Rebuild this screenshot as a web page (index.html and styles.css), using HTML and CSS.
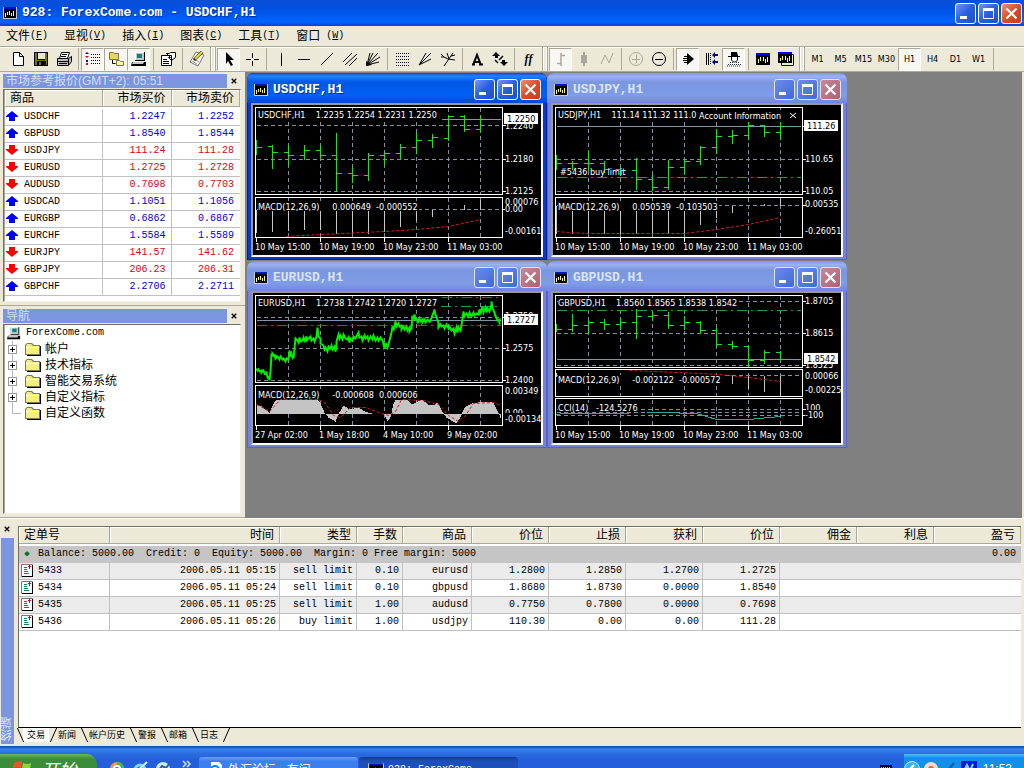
FILE: index.html
```html
<!DOCTYPE html>
<html lang="zh-CN">
<head>
<meta charset="utf-8">
<title>928: ForexCome.com - USDCHF,H1</title>
<link rel="stylesheet" href="styles.css">
</head>
<body>
<svg class="defs" aria-hidden="true">
  <symbol id="app" viewBox="0 0 14 12"><path fill="#c8c8c8" d="M0 0h14v12H0z"/><path fill="#000" d="M1 1h12v10H1z"/><path fill="#0018b8" d="M1 0h12v2H1z"/><path fill="#ff6" d="M2 6h1v4H2zM4 5h1v3H4zM6 4h1v4H6zM8 6h1v3H8zM10 4h1v5h-1z"/></symbol>
  <symbol id="min" viewBox="0 0 21 21"><path fill="#fff" d="M5 13h7v3H5z"/></symbol>
  <symbol id="max" viewBox="0 0 21 21"><path fill="none" stroke="#fff" d="M5.500 5.500h10v10h-10z"/><path fill="#fff" d="M5 5h11v3H5z"/></symbol>
  <symbol id="cls" viewBox="0 0 21 21"><path stroke="#fff" stroke-width="2.200" d="M5.500 5.500l10 10M15.500 5.500l-10 10"/></symbol>
  <symbol id="x" viewBox="0 0 8 8"><path fill="none" stroke="#000" stroke-width="1.800" d="M1 1l6 6M7 1L1 7"/></symbol>
  <symbol id="up" viewBox="0 0 12 10"><path fill="#00f" d="M6 0l6 5v1H9v4H3V6H0V5z"/></symbol>
  <symbol id="dn" viewBox="0 0 12 10"><path fill="#f00" d="M6 10L0 5V4h3V0h6v4h3v1z"/></symbol>
  <symbol id="pc" viewBox="0 0 16 16"><path fill="#000" d="M4 1h10v9H4zM1 11h14v4H0z"/><path fill="#c6c6c6" d="M4 1h9v8H4zM2 11h11l-1 2H1z"/><path fill="#088" d="M6 3h5v4H6z"/><path fill="#fff" d="M4 1h9v1H5v7H4z"/></symbol>
  <symbol id="folder" viewBox="0 0 16 13"><path fill="#000" d="M2 12h13V3h1v10H2z"/><path fill="#808040" d="M0 2l2-2h5l2 2h6v10H0z"/><path fill="#f3ee86" d="M1 3l1-2h4l2 2h6v8H1z"/><path fill="#fffcd0" d="M1 4h13v1H1z"/></symbol>
  <symbol id="doc" viewBox="0 0 12 13"><path fill="#fff" stroke="#777" d="M.5.5h11v12H.5z"/><path fill="#000" d="M1 12h11v1H1zM11 1h1v12h-1z"/><path stroke="#085" d="M3 3.500h3M3 5.500h3M3 7.500h4M3 9.500h5"/><path fill="#e00020" d="M8 1h1v1h1v1H9v2H8V3H7V2h1z"/></symbol>
  <g id="vgrid"><path class="grid" d="M35 2V89M67 2V89M99 2V89M131 2V89M163 2V89M195 2V89M227 2V89M35 92V132M67 92V132M99 92V132M131 92V132M163 92V132M195 92V132M227 92V132"/></g>
</svg>

<header class="titlebar">
  <svg class="appicon"><use href="#app"/></svg>
  <h1 class="caption">928: ForexCome.com - USDCHF,H1</h1>
  <div class="winbtns">
    <button class="wb" aria-label="最小化"><svg><use href="#min"/></svg></button>
    <button class="wb" aria-label="最大化"><svg><use href="#max"/></svg></button>
    <button class="wb red" aria-label="关闭"><svg><use href="#cls"/></svg></button>
  </div>
</header>

<nav class="menu">
  <button>文件<span class="m">(<u>F</u>)</span></button>
  <button>显视<span class="m">(<u>V</u>)</span></button>
  <button>插入<span class="m">(<u>I</u>)</span></button>
  <button>图表<span class="m">(<u>C</u>)</span></button>
  <button>工具<span class="m">(<u>T</u>)</span></button>
  <button>窗口<span class="m"> (<u>W</u>)</span></button>
</nav>

<div class="toolbar">
  <span class="grip"></span>
  <button aria-label="新建"><svg viewBox="0 0 16 16"><path fill="#fff" stroke="#000" d="M3.500 1.500h6l4 4v9h-10zM9.500 1.500v4h4"/></svg></button>
  <button aria-label="保存"><svg viewBox="0 0 16 16"><path d="M1 1h14v14H1z"/><path fill="#770" d="M2 2h2v7h8V2h2v12H2z"/><path fill="#e8e5d6" d="M5 2h7v6H5zM9 11h3v3H9z"/><path d="M4 10h9v5H8v-4H6v4H4z"/></svg></button>
  <button aria-label="打印"><svg viewBox="0 0 16 16"><path fill="#fff" stroke="#000" d="M5.500 1.500h8l-2 6h-8z"/><path fill="#bbb" stroke="#000" d="M1.500 7.500h11l3-2v5l-3 4h-11z"/><path stroke="#000" d="M1 10.500h11M3 12.500h8M6 3.500h5M5 5.500h5M12.500 8v6"/></svg></button>
  <span class="sep"></span>
  <button class="on" aria-label="市场报价"><svg viewBox="0 0 16 16"><path fill="#00c" d="M2 1l2 2H0zM1 9h2v2H1z"/><path fill="#e00" d="M0 5h4L2 7zM1 12h2v2H1z"/><path stroke="#000" stroke-dasharray="1 1" d="M6 3.500h10M6 6.500h10M6 9.500h10M6 12.500h10"/></svg></button>
  <button class="on" aria-label="导航"><svg viewBox="0 0 16 16"><path fill="#e9d750" stroke="#775" d="M1.500 1.500h4l1 1h4v6h-9z"/><path fill="#fff59a" stroke="#775" d="M8.500 9.500h3l1 1h3v4h-7z"/><path stroke="#000" fill="none" d="M4.500 9v3.500h3"/></svg></button>
  <button class="on" aria-label="终端"><svg viewBox="0 0 16 16"><use href="#pc"/></svg></button>
  <span class="sep"></span>
  <button aria-label="属性"><svg viewBox="0 0 16 16"><path fill="#fff" stroke="#000" d="M1.500 4.500h10v10h-10zM6.500 2.500h3l1-1h5v5l-4 3-3-3h2z"/><path stroke="#000" d="M3 8.500h4M3 10.500h6M3 12.500h6"/></svg></button>
  <span class="sep"></span>
  <button aria-label="测试"><svg viewBox="0 0 16 16"><path fill="#fff" stroke="#777" d="M7 1l8 3-6 11-8-4z"/><path stroke="#987" d="M3 10l5 3M5 8l5 3"/><path stroke="#000" stroke-width="3" d="M5 9l8-8"/><path stroke="#fd2" stroke-width="2" d="M6 8l7-7"/></svg></button>
  <span class="gripgap"></span>
  <button class="on" aria-label="光标"><svg viewBox="0 0 16 16"><path d="M5 1l8 8H9l3 5-2 1-3-5-2 3z"/></svg></button>
  <button aria-label="十字"><svg viewBox="0 0 16 16"><path stroke="#000" d="M8.500 2v5M8.500 10v5M2 8.500h5M10 8.500h5"/></svg></button>
  <span class="sep"></span>
  <button aria-label="垂直线"><svg viewBox="0 0 16 16"><path stroke="#000" d="M8.500 2v13"/></svg></button>
  <button aria-label="水平线"><svg viewBox="0 0 16 16"><path stroke="#000" d="M2 8.500h12"/></svg></button>
  <button aria-label="趋势线"><svg viewBox="0 0 16 16"><path stroke="#000" d="M2 14L14 2"/></svg></button>
  <button aria-label="通道"><svg viewBox="0 0 16 16"><path stroke="#000" d="M1 11l9-9M3 14L15 3M7 15l8-8"/></svg></button>
  <button aria-label="江恩扇形"><svg viewBox="0 0 16 16"><path stroke="#000" d="M2 14L5 2M2 14l6-12M2 14L13 2M2 14l13-8M2 14l12-3"/><path d="M1 15v-5l6 4z"/></svg></button>
  <span class="sep"></span>
  <button aria-label="斐波那契"><svg viewBox="0 0 16 16"><path stroke="#000" stroke-dasharray="1 1" d="M2 2.500h13M2 5.500h13M2 8.500h13M2 11.500h13M2 14.500h13"/></svg></button>
  <button aria-label="扇形"><svg viewBox="0 0 16 16"><path stroke="#000" d="M2 14L9 2M2 14L14 2M2 14l12-6"/></svg></button>
  <button aria-label="叉线"><svg viewBox="0 0 16 16"><path fill="none" stroke="#000" d="M4 15L13 2M1 3l3 3 4 2 7 1M7 2l2 6M1 6l3 0M11 5l4-1"/></svg></button>
  <span class="sep"></span>
  <button aria-label="文本"><svg viewBox="0 0 16 16"><path fill="none" stroke="#000" stroke-width="2" d="M4 14L8 4l4 10M5.500 11h5M3 13.500h3M10 13.500h4"/></svg></button>
  <button aria-label="箭头"><svg viewBox="0 0 16 16"><path d="M4 1l4 4H6v2H3V5H0zM12 15l-4-4h2V9h3v2h3z"/><path stroke="#000" stroke-width="1.500" d="M3 9l3 3M7 9l4-4"/></svg></button>
  <span class="sep"></span>
  <button class="ff" aria-label="指标"><i>f</i><i>f</i></button>
  <span class="gripgap"></span>
  <button class="on" aria-label="柱状图"><svg viewBox="0 0 16 16"><path stroke="#aaa79a" stroke-width="1.500" d="M8 2v13M8 4.500h4M4 12.500h4"/></svg></button>
  <button aria-label="蜡烛图"><svg viewBox="0 0 16 16"><path fill="#aaa79a" d="M7 1h2v3h2v8H9v3H7v-3H5V4h2z"/></svg></button>
  <button aria-label="折线图"><svg viewBox="0 0 16 16"><path fill="none" stroke="#aaa79a" d="M2 13l4-9 4 8 4-10"/></svg></button>
  <span class="sep"></span>
  <button aria-label="放大"><svg viewBox="0 0 16 16"><circle cx="8" cy="8" r="6.500" fill="none" stroke="#aaa79a"/><path stroke="#aaa79a" d="M4 8.500h8M8.500 4v8"/></svg></button>
  <button aria-label="缩小"><svg viewBox="0 0 16 16"><circle cx="8" cy="8" r="6.500" fill="none" stroke="#000"/><path stroke="#000" d="M4 8.500h8"/></svg></button>
  <span class="sep"></span>
  <button class="on" aria-label="自动滚动"><svg viewBox="0 0 16 16"><path d="M7 2l7 6-7 6z"/><path stroke="#000" d="M4 5.500h4M3 7.500h4M3 9.500h4M4 11.500h4"/></svg></button>
  <button aria-label="图表移位"><svg viewBox="0 0 16 16"><path stroke="#000" d="M3.500 2v12M5.500 2v12"/><path stroke="#000" stroke-dasharray="1 1" d="M7.500 2v12"/><path fill="#008" d="M9 4l3-3v2h3v2h-3v2zM9 11l3-3v2h3v2h-3v2z"/></svg></button>
  <button class="on" aria-label="专家"><svg viewBox="0 0 16 16"><path d="M5 1h6l1 4h2v1H2V5h3z"/><path fill="#fff" stroke="#000" d="M5.500 6v3l2 2h2l2-2V6"/><path stroke="#235" stroke-dasharray="1 1" d="M2 13.500h13M1 15h14M4 11.500h3M10 11.500h3"/></svg></button>
  <span class="sep"></span>
  <button aria-label="新图表"><svg viewBox="0 0 16 16"><path d="M1 2h14v12H1z"/><path fill="#00f" d="M1 2h14v2H1z"/><path fill="#ff5" d="M3 8h1v4H3zM5 6h1v4H5zM8 6h1v4H8zM10 8h1v4h-1zM12 6h1v5h-1z"/></svg></button>
  <button aria-label="配置"><svg viewBox="0 0 16 16"><path fill="none" stroke="#008" d="M3.500 3.500h12v11h-12z"/><path d="M0 1h14v11H0z"/><path fill="#00f" d="M0 1h14v2H0z"/><path fill="#ff5" d="M2 7h1v3H2zM4 5h1v4H4zM7 5h1v4H7zM9 7h1v4H9zM11 5h1v5h-1z"/></svg></button>
  <span class="gripgap"></span>
  <button>M1</button><button>M5</button><button>M15</button><button>M30</button><button class="on">H1</button><button>H4</button><button>D1</button><button>W1</button>
  <span class="sep"></span>
</div>

<main class="work">
  <aside class="side">
    <section class="panel market">
      <div class="ptitle"><h2>市场参考报价(GMT+2): 05:51</h2><button aria-label="关闭"><svg><use href="#x"/></svg></button></div>
      <div class="well">
        <table class="quotes">
          <thead><tr><th>商品</th><th>市场买价</th><th>市场卖价</th></tr></thead>
          <tbody>
            <tr class="u"><td><svg><use href="#up"/></svg>USDCHF</td><td>1.2247</td><td>1.2252</td></tr>
            <tr class="u"><td><svg><use href="#up"/></svg>GBPUSD</td><td>1.8540</td><td>1.8544</td></tr>
            <tr class="d"><td><svg><use href="#dn"/></svg>USDJPY</td><td>111.24</td><td>111.28</td></tr>
            <tr class="d"><td><svg><use href="#dn"/></svg>EURUSD</td><td>1.2725</td><td>1.2728</td></tr>
            <tr class="d"><td><svg><use href="#dn"/></svg>AUDUSD</td><td>0.7698</td><td>0.7703</td></tr>
            <tr class="u"><td><svg><use href="#up"/></svg>USDCAD</td><td>1.1051</td><td>1.1056</td></tr>
            <tr class="u"><td><svg><use href="#up"/></svg>EURGBP</td><td>0.6862</td><td>0.6867</td></tr>
            <tr class="u"><td><svg><use href="#up"/></svg>EURCHF</td><td>1.5584</td><td>1.5589</td></tr>
            <tr class="d"><td><svg><use href="#dn"/></svg>EURJPY</td><td>141.57</td><td>141.62</td></tr>
            <tr class="d"><td><svg><use href="#dn"/></svg>GBPJPY</td><td>206.23</td><td>206.31</td></tr>
            <tr class="u"><td><svg><use href="#up"/></svg>GBPCHF</td><td>2.2706</td><td>2.2711</td></tr>
          </tbody>
        </table>
      </div>
    </section>
    <section class="panel navi">
      <div class="ptitle"><h2>导航</h2><button aria-label="关闭"><svg><use href="#x"/></svg></button></div>
      <div class="well">
        <div class="root"><svg><use href="#pc"/></svg><span class="m">ForexCome.com</span></div>
        <ul class="tree">
          <li><button class="plus" aria-label="展开"></button><svg><use href="#folder"/></svg>帐户</li>
          <li><button class="plus" aria-label="展开"></button><svg><use href="#folder"/></svg>技术指标</li>
          <li><button class="plus" aria-label="展开"></button><svg><use href="#folder"/></svg>智能交易系统</li>
          <li><button class="plus" aria-label="展开"></button><svg><use href="#folder"/></svg>自定义指标</li>
          <li class="last"><svg><use href="#folder"/></svg>自定义函数</li>
        </ul>
      </div>
    </section>
  </aside>

  <div class="mdi">
    <section class="win w1 active">
      <div class="wtitle"><svg class="appicon"><use href="#app"/></svg><h2 class="caption">USDCHF,H1</h2><div class="winbtns"><button class="wb" aria-label="最小化"><svg><use href="#min"/></svg></button><button class="wb" aria-label="最大化"><svg><use href="#max"/></svg></button><button class="wb red" aria-label="关闭"><svg><use href="#cls"/></svg></button></div></div>
      <svg class="chart" viewBox="0 0 288 150">
        <g class="px">
          <use href="#vgrid"/><path class="grid" d="M3 20H249M3 54H249M3 86H249M3 104H249"/>
          <path class="price" d="M188 14H247"/>
          <path class="bar" d="M3 34V49M3 42h5M19 39V63M14 41h5M19 47h5M35 39V60M30 47h5M35 50h5M51 39V54M46 50h5M51 45h5M67 39V53M62 45h5M67 50h5M83 27V85M78 50h5M83 68h5M99 62V77M94 68h5M99 70h5M115 47V75M110 70h5M115 50h5M131 46V59M126 50h5M131 48h5M147 38V54M142 48h5M147 42h5M163 27V48M158 42h5M163 35h5M179 28V42M174 35h5M179 32h5M195 10V35M190 33h5M195 11h5M211 9V26M206 11h5M211 24h5M227 10V26M222 24h5M227 14h5"/>
          <path class="hist" d="M3 104V127M19 104V126M35 104V125M51 104V124M67 104V124M83 104V128M99 104V128M115 104V128M131 104V126M147 104V121M163 104V115M179 104V111M211 99V104M227 94V104"/>
          <path class="sig" d="M33 131L67 129L131 126L163 124L195 121L227 114"/>
          <path class="frame" d="M2 2H249V89H2zM2 92H249V132H2zM249 20h3M249 54h3M249 86h3M249 104h2M3 132v4M67 132v4M131 132v4M195 132v4"/>
        </g>
        <rect x="5" y="5" width="182" height="10"/><rect x="5" y="96" width="161" height="10"/>
        <text x="5" y="13">USDCHF,H1&#160;&#160;&#160; 1.2235 1.2254 1.2231 1.2250</text>
        <text x="5" y="105">MACD(12,26,9)&#160;&#160;&#160;&#160; 0.000649&#160; -0.000552</text>
        <text x="252" y="24">1.2240</text><text x="252" y="57">1.2180</text><text x="252" y="89">1.2125</text><text x="252" y="100">0.00076</text><text x="252" y="107">0.00</text><text x="252" y="129">-0.00161</text>
        <rect class="tag" x="251" y="8" width="34" height="11"/><text class="tagt" x="254" y="17">1.2250</text>
        <text x="2" y="145">10 May 15:00</text><text x="66" y="145">10 May 19:00</text><text x="130" y="145">10 May 23:00</text><text x="194" y="145">11 May 03:00</text>
      </svg>
    </section>

    <section class="win w2">
      <div class="wtitle"><svg class="appicon"><use href="#app"/></svg><h2 class="caption">USDJPY,H1</h2><div class="winbtns"><button class="wb" aria-label="最小化"><svg><use href="#min"/></svg></button><button class="wb" aria-label="最大化"><svg><use href="#max"/></svg></button><button class="wb red" aria-label="关闭"><svg><use href="#cls"/></svg></button></div></div>
      <svg class="chart" viewBox="0 0 288 150">
        <g class="px">
          <use href="#vgrid"/><path class="grid" d="M3 54H249M3 86H249M3 100H249"/>
          <path class="price" d="M3 21H247"/><path class="order" d="M3 72H247"/>
          <path class="bar" d="M3 49V64M3 58h5M19 55V64M14 58h10M35 45V65M30 58h10M51 55V67M46 58h5M51 64h5M67 62V70M62 64h5M67 65h5M83 52V84M78 65h5M83 74h5M99 68V85M94 74h5M99 82h5M115 54V84M110 82h5M115 62h5M131 54V68M126 62h5M131 56h5M147 40V59M142 56h5M147 42h5M163 23V48M158 42h5M163 31h5M179 24V38M174 31h5M179 30h5M195 16V34M190 30h5M195 20h5M211 19V31M206 20h5M211 27h5M227 16V34M222 27h5M227 21h5"/>
          <path class="hist" d="M3 100V128M19 100V128M35 100V128M51 100V128M67 100V128M83 100V128M99 100V128M115 100V128M131 100V127M147 100V119M163 100V112M179 100V107M211 98V100M227 93V100"/>
          <path class="sig" d="M3 126L15 127L35 128H131L163 124L195 119L227 112"/>
          <path class="frame" d="M2 2H249V89H2zM2 92H249V132H2zM249 21h3M249 54h3M249 86h3M249 100h3M3 132v4M67 132v4M131 132v4M195 132v4"/>
        </g>
        <rect x="5" y="5" width="140" height="10"/><rect x="5" y="96" width="161" height="10"/>
        <text x="5" y="13">USDJPY,H1&#160;&#160;&#160; 111.14 111.32 111.0</text>
        <rect x="145" y="5" width="101" height="11"/><text x="146" y="14">Account Information</text>
        <path class="cx" d="M237 8l6 5M243 8l-6 5"/>
        <text x="7" y="70">#5436 buy limit</text>
        <text x="5" y="105">MACD(12,26,9)&#160;&#160;&#160;&#160; 0.050539&#160; -0.103503</text>
        <text x="252" y="57">110.65</text><text x="252" y="89">110.05</text><text x="252" y="102">0.00535</text><text x="252" y="129">-0.26051</text>
        <rect class="tag" x="251" y="15" width="34" height="11"/><text class="tagt" x="254" y="24">111.26</text>
        <text x="2" y="145">10 May 15:00</text><text x="66" y="145">10 May 19:00</text><text x="130" y="145">10 May 23:00</text><text x="194" y="145">11 May 03:00</text>
      </svg>
    </section>

    <section class="win w3">
      <div class="wtitle"><svg class="appicon"><use href="#app"/></svg><h2 class="caption">EURUSD,H1</h2><div class="winbtns"><button class="wb" aria-label="最小化"><svg><use href="#min"/></svg></button><button class="wb" aria-label="最大化"><svg><use href="#max"/></svg></button><button class="wb red" aria-label="关闭"><svg><use href="#cls"/></svg></button></div></div>
      <svg class="chart" viewBox="0 0 288 150">
        <g class="px">
          <use href="#vgrid"/><path class="grid" d="M3 24H249M3 55H249M3 87H249"/>
          <path class="stop" d="M188 4H247M3 32H247"/><path class="order" d="M187 13H247"/><path class="price" d="M3 27H247"/>
        </g>
        <g class="px">
          <path class="line" d="M3 75l1 2 1-1 1 2 2-1v2l2-2 1 3L13 79l1 5 1 1 1-2v4L17 78L18 60l1 3v-3l2 3 1-2v4l2-2 2 3 1-3 2 3 1-1 2 3 1-3 2 1L36 57l1 6 1-3 1 4 1-2V65L42 45l2 2 1 2 1-5 1 4 2-1 1-3 1 3 2-4v4L55 45l2-2 1 4 2-2L61 48L63 43L64 34l1 9L66 44l1 1v5L70 52l1 4 1-2 2 4 1-5 2 2 1-3 1 4 2-3 1 5L83 53V48L85 41l1 4 1-3 2 4 1-5 2 4 2 1 1-2 1 5 1-4 2 2L100 43l2 2 3-6 1 5 2-1 1 4 2-5 1 3 2-2 1 4 2-4 2 3 1-4 2 5 2-3 1 3 2-3 1 2L129 46l1 5 1-2v5l2-3 1 3L135 51l1-4L138 39l1-6 1 4L142 28l1 5 2-3 1 3 2-1V36l2-3 1 3 2-3 1 4 2-3V38L158 35L159 22l1 4 1-5 1 5 2 0V30l2-5 1 3 2-2V29l2-3 1 3 2-3 2 2L176 29L179 22L181 16l1 6 1 1L184 27l1 2V34l2-3 1 2 2-1 1 3 2-4 2 4 1-2 2 4L200 35l1 5 2-6 1 5 1-5 2 3L208 32L210 18l1 5 2-3 2 3 1-4 2 4 2-4 1 3 2-2 2 1L226 16l1 5 1-5L229 13l1 6 2-5 1 5 1-4 2 3L238 11V8L239 15L241 19l1 4V22L244 27L246 26V31"/>
          <path class="area" d="M3 111L8 113L13 117L16 120L20 110L23 106H63L67 110L71 119L75 124L82 128L86 119L90 112L96 116L105 114L111 118L118 120L130 120L134 127L137 124L140 110L142 106H153L159 111L168 106L175 111L180 112L184 109L188 117L193 124L203 130L207 124L211 114L218 110L230 108H239L243 115L247 124V120H3z"/>
          <path class="sig" d="M3 111L16 118L27 106H65L72 110L80 122L87 124L97 114L112 114L125 119L135 122L142 118L148 106L170 107L185 111L195 122L205 128L212 122L220 110L240 109L247 112"/>
          <path class="frame" d="M2 2H249V89H2zM2 92H249V132H2zM249 24h3M249 55h3M249 87h3M3 132v4M67 132v4M131 132v4M195 132v4"/>
        </g>
        <rect x="5" y="5" width="180" height="10"/><rect x="5" y="96" width="161" height="10"/>
        <text x="5" y="13">EURUSD,H1&#160;&#160;&#160; 1.2738 1.2742 1.2720 1.2727</text>
        <text x="5" y="105">MACD(12,26,9)&#160;&#160;&#160;&#160; -0.000608&#160; 0.000606</text>
        <text x="252" y="26">1.2750</text><text x="252" y="58">1.2575</text><text x="252" y="90">1.2400</text><text x="252" y="101">0.00349</text><text x="252" y="123">0.00</text><rect x="250" y="120" width="38" height="10"/><text x="252" y="129">-0.00134</text>
        <rect class="tag" x="251" y="21" width="34" height="11"/><text class="tagt" x="254" y="30">1.2727</text>
        <text x="2" y="145">27 Apr 02:00</text><text x="66" y="145">1 May 18:00</text><text x="130" y="145">4 May 10:00</text><text x="194" y="145">9 May 02:00</text>
      </svg>
    </section>

    <section class="win w4">
      <div class="wtitle"><svg class="appicon"><use href="#app"/></svg><h2 class="caption">GBPUSD,H1</h2><div class="winbtns"><button class="wb" aria-label="最小化"><svg><use href="#min"/></svg></button><button class="wb" aria-label="最大化"><svg><use href="#max"/></svg></button><button class="wb red" aria-label="关闭"><svg><use href="#cls"/></svg></button></div></div>
      <svg class="chart" viewBox="0 0 288 150">
        <g class="px">
          <use href="#vgrid"/><path class="grid" d="M3 8H249M3 40H249M3 72H249M3 82H249M3 116H249M3 119H249M3 122H249"/>
          <path class="price" d="M3 66H247"/><path class="order" d="M3 17H247"/>
          <path class="bar" d="M3 30V38M3 36h5M19 20V38M14 36h5M19 32h5M35 26V40M30 32h5M35 29h5M51 25V36M46 29h5M51 31h5M67 24V36M62 31h5M67 29h5M83 15V45M78 29h5M83 23h5M99 18V27M94 23h5M99 22h5M115 18V35M110 22h5M115 32h5M131 22V36M126 32h5M131 29h5M147 27V40M142 29h5M147 37h5M163 34V53M158 37h5M163 51h5M179 47V55M174 51h5M179 53h5M195 53V72M190 53h5M195 67h5M211 56V70M206 67h5M211 59h5M227 57V67M222 59h5M227 66h5"/>
          <path class="hist" d="M3 79V83M179 82V90M195 82V95M211 82V98M227 82V102"/>
          <path class="sig" d="M76 77L126 79L166 81L195 84L227 88"/>
          <path class="gap" d="M3 75H249M3 104H249"/>
          <path class="frame" d="M2 2H249V74H2zM2 76H249V103H2zM2 105H249V132H2zM249 8h3M249 40h3M249 72h3M249 116h3M249 122h3M3 132v4M67 132v4M131 132v4M195 132v4"/>
        </g>
        <rect x="5" y="5" width="181" height="10"/><rect x="5" y="82" width="165" height="10"/><rect x="5" y="110" width="83" height="9"/>
        <g class="px"><path class="cci" d="M3 121L10 120H75M93 119H106L143 120L163 126H195L227 123"/></g>
        <text x="5" y="13">GBPUSD,H1&#160;&#160;&#160; 1.8560 1.8565 1.8538 1.8542</text>
        <text x="5" y="90">MACD(12,26,9)&#160;&#160;&#160;&#160; -0.002122&#160; -0.000572</text>
        <text x="5" y="118">CCI(14)&#160;&#160; -124.5276</text>
        <text x="252" y="11">1.8705</text><text x="252" y="43">1.8615</text><text x="252" y="75">1.8525</text><text x="252" y="86">0.00066</text><text x="252" y="100">-0.00225</text><text x="252" y="118">100</text><rect x="252" y="117" width="34" height="8"/><text x="252" y="125">-100</text>
        <rect class="tag" x="251" y="60" width="34" height="11"/><text class="tagt" x="254" y="69">1.8542</text>
        <text x="2" y="145">10 May 15:00</text><text x="66" y="145">10 May 19:00</text><text x="130" y="145">10 May 23:00</text><text x="194" y="145">11 May 03:00</text>
      </svg>
    </section>
  </div>
</main>

<section class="terminal">
  <div class="strip"><button aria-label="关闭"><svg><use href="#x"/></svg></button><h2>终端</h2></div>
  <div class="tmain">
    <div class="twell">
      <table class="orders">
        <colgroup><col class="c91"><col class="c170"><col class="c77"><col class="c46"><col class="c69"><col class="c77"><col class="c77"><col class="c77"><col class="c77"><col class="c77"><col class="c77"><col></colgroup>
        <thead><tr><th>定单号</th><th>时间</th><th>类型</th><th>手数</th><th>商品</th><th>价位</th><th>止损</th><th>获利</th><th>价位</th><th>佣金</th><th>利息</th><th>盈亏</th></tr></thead>
        <tbody>
          <tr class="bal"><td colspan="11"><span class="dot">◆</span>Balance: 5000.00&#160; Credit: 0&#160; Equity: 5000.00&#160; Margin: 0 Free margin: 5000</td><td>0.00</td></tr>
          <tr class="alt"><td><svg><use href="#doc"/></svg>5433</td><td>2006.05.11 05:15</td><td>sell limit</td><td>0.10</td><td>eurusd</td><td>1.2800</td><td>1.2850</td><td>1.2700</td><td>1.2725</td><td></td><td></td><td></td></tr>
          <tr><td><svg><use href="#doc"/></svg>5434</td><td>2006.05.11 05:24</td><td>sell limit</td><td>0.10</td><td>gbpusd</td><td>1.8680</td><td>1.8730</td><td>0.0000</td><td>1.8540</td><td></td><td></td><td></td></tr>
          <tr class="alt"><td><svg><use href="#doc"/></svg>5435</td><td>2006.05.11 05:25</td><td>sell limit</td><td>1.00</td><td>audusd</td><td>0.7750</td><td>0.7800</td><td>0.0000</td><td>0.7698</td><td></td><td></td><td></td></tr>
          <tr><td><svg><use href="#doc"/></svg>5436</td><td>2006.05.11 05:26</td><td>buy limit</td><td>1.00</td><td>usdjpy</td><td>110.30</td><td>0.00</td><td>0.00</td><td>111.28</td><td></td><td></td><td></td></tr>
        </tbody>
      </table>
    </div>
    <div class="tabs"><button class="sel">交易</button><button>新闻</button><button>帐户历史</button><button>警报</button><button>邮箱</button><button>日志</button></div>
  </div>
</section>

<footer class="taskbar">
  <button class="start"><svg viewBox="0 0 20 20"><path fill="#f0522a" d="M2 4q4-3 8-1L9 9q-4-2-8 0z"/><path fill="#8fd43a" d="M11 4q4 2 8 0l-1 6q-4 2-8 0z"/><path fill="#4a8cf5" d="M1 10q4-2 8 0l-1 6q-4-2-8 0z"/><path fill="#fc3" d="M10 11q4 2 8 0l-1 6q-4 2-8 0z"/></svg>开始</button>
  <div class="quick">
    <svg viewBox="0 0 16 16"><circle cx="8" cy="8" r="7" fill="#e94"/><path fill="#4b4" d="M8 1a7 7 0 0 1 7 7H8z"/><circle cx="8" cy="8" r="4" fill="#fff"/><circle cx="8" cy="8" r="2" fill="#c33"/></svg>
    <svg viewBox="0 0 16 16"><circle cx="8" cy="9" r="5" fill="none" stroke="#7cd4ff" stroke-width="3"/><path stroke="#cef" stroke-width="2" d="M2 13L15 1M3 9h10"/></svg>
    <svg viewBox="0 0 16 16"><circle cx="8" cy="8" r="7" fill="#cfe8f8"/><path fill="none" stroke="#268" stroke-width="2" d="M4 9l3-4 4 2 3-4"/></svg>
    <svg class="chev" viewBox="0 0 10 10"><path fill="none" stroke="#cfe0ff" stroke-width="1.500" d="M1 1l3 3-3 3M5 1l3 3-3 3"/></svg>
  </div>
  <button class="task"><svg viewBox="0 0 16 16"><path fill="#fff" d="M3 0h8l3 3v13H3z"/><circle cx="7" cy="8" r="4" fill="none" stroke="#27d" stroke-width="2"/></svg>外汇论坛 - 有问...</button>
  <button class="task cur"><svg viewBox="0 0 14 12"><use href="#app"/></svg><span class="m">928: ForexCome...</span></button>
  <div class="tray">
    <svg class="kb" viewBox="0 0 16 16"><path d="M2 4h12v8H2z"/><path stroke="#aaf" stroke-dasharray="1 1" d="M3 6.500h10M3 8.500h10"/></svg>
    <div class="notif">
      <svg viewBox="0 0 16 16"><circle cx="8" cy="8" r="7.500" fill="#3cb4f4" stroke="#cef"/><path fill="none" stroke="#fff" stroke-width="2" d="M10 4L6 8l4 4"/></svg>
      <svg viewBox="0 0 16 16"><circle cx="8" cy="8" r="7" fill="#f6d9c8"/><circle cx="8" cy="8" r="3" fill="#e55"/></svg>
      <svg viewBox="0 0 16 16"><path stroke="#05a" stroke-width="2" d="M2 14L12 2"/></svg>
      <svg viewBox="0 0 16 16"><path fill="#0018d8" d="M0 0h16v16H0z"/><path fill="none" stroke="#7df" stroke-width="2" d="M3 10l3-6 3 6 3-7"/></svg>
      <time>11:53</time>
    </div>
  </div>
</footer>
</body>
</html>
```
FILE: styles.css
```css
* { box-sizing: border-box; }
body {
  margin: 0; height: 100vh; overflow: hidden;
  display: flex; flex-direction: column;
  background: #ece9d8; color: #000;
  font: 12px/16px "Liberation Sans", "Noto Sans CJK SC", sans-serif;
}
button { font: inherit; color: inherit; background: none; border: 0; padding: 0; margin: 0; }
h1, h2 { margin: 0; font-weight: normal; font-size: 12px; }
table { border-collapse: separate; border-spacing: 0; table-layout: fixed; width: 100%; }
svg { display: block; flex: none; }
.defs { position: absolute; width: 0; height: 0; }
.m { font: 10px/16px "Liberation Mono", monospace; white-space: pre; }

/* Title bars */
.titlebar {
  flex: none; height: 26px; display: flex; align-items: center; padding: 0 2px 0 3px;
  background: linear-gradient(#0a50d8, #0050e0 30%, #0058ee 55%, #0064ff 85%, #0040c8);
}
.appicon { width: 14px; height: 12px; }
.caption {
  flex: 1; margin-left: 5px; color: #fff; white-space: pre;
  font: bold 13px/18px "Liberation Mono", monospace; text-shadow: 1px 1px #0030a0;
}
.winbtns { display: flex; gap: 2px; }
.wb {
  width: 21px; height: 21px; border: 1px solid #fff; border-radius: 3px;
  background: linear-gradient(135deg, #6f97f5, #2a5ee0 50%, #1c50d0);
}
.wb svg { width: 21px; height: 21px; margin: -1px; }
.wb.red { background: linear-gradient(135deg, #f09070, #dc4c28 50%, #c83c18); }

/* Menu and toolbar */
.menu { flex: none; height: 20px; display: flex; padding-left: 6px; gap: 16px; }
.menu button { display: flex; align-items: center; line-height: 18px; }
.toolbar {
  flex: none; height: 26px; display: flex; align-items: center;
  border-top: 1px solid #aca899; border-bottom: 1px solid #aca899; box-shadow: inset 0 1px #fff;
}
.toolbar button {
  width: 23px; height: 23px; flex: none; display: flex; align-items: center; justify-content: center;
  font: 9px/14px "DejaVu Sans Condensed", "DejaVu Sans", sans-serif;
}
.toolbar button svg { width: 16px; height: 16px; }
.toolbar .on { background: #f8f7f1; border: 1px solid; border-color: #aca899 #fff #fff #aca899; }
.toolbar .ff { font: bold 12px/14px "Liberation Serif", serif; }
.grip { width: 6px; flex: none; }
.sep { width: 6px; height: 22px; flex: none; background: linear-gradient(90deg, transparent 3px, #aca899 3px 4px, transparent 4px); }
.gripgap {
  width: 9px; height: 24px; flex: none;
  background: linear-gradient(90deg, transparent 2px, #aca899 2px 3px, #fff 3px 4px, transparent 4px 6px, #fff 6px 7px, #aca899 7px 8px, transparent 8px);
}

/* Left panels */
.work { flex: 1; min-height: 0; display: flex; padding-right: 2px; }
.side { width: 246px; flex: none; display: flex; flex-direction: column; border-right: 1px solid #808080; }
.panel { display: flex; flex-direction: column; padding: 0 4px 3px 3px; border-bottom: 1px solid #aca899; }
.market { flex: none; height: 234px; }
.navi { flex: 1; padding-top: 1px; }
.ptitle { display: flex; height: 17px; align-items: center; }
.ptitle h2 { width: 224px; height: 14px; line-height: 14px; padding-left: 3px; color: #d3def8; background: #7a96df; }
.ptitle button { width: 14px; display: flex; justify-content: center; }
.ptitle svg, .strip button svg { width: 6px; height: 6px; }
.well { flex: 1; background: #fff; border: 1px solid; border-color: #716f64 #f1efe2 #f1efe2 #716f64; box-shadow: inset 1px 0 #aca899; padding-left: 1px; }
.quotes th, .orders th {
  height: 17px; padding: 0 5px; font-weight: normal; text-align: right; line-height: 16px;
  background: #ece9d8; border-right: 1px solid #aca899; border-bottom: 1px solid #aca899; box-shadow: inset 1px 1px #fff;
}
.quotes th:first-child, .orders th:first-child { text-align: left; }
.quotes th:first-child { width: 98px; }
.quotes thead::after, .orders thead::after { content: ""; display: block; height: 2px; }
.quotes td, .orders td {
  height: 17px; padding: 0 5px; text-align: right; white-space: pre;
  font: 10px/16px "Liberation Mono", monospace;
  border-right: 1px solid #c0c0c0; border-bottom: 1px solid #c0c0c0;
}
.quotes td:last-child { border-right: 0; padding-right: 6px; }
.quotes td:first-child { text-align: left; color: #000; padding-left: 1px; }
.quotes td svg { display: inline-block; width: 12px; height: 10px; margin-right: 6px; vertical-align: middle; }
.quotes .u { color: #0000e0; }
.quotes .d { color: #e00010; }
.root { display: flex; align-items: center; gap: 4px; padding-left: 1px; }
.root svg { width: 16px; height: 14px; }
.tree { list-style: none; margin: 0; padding: 0 0 0 3px; }
.tree li { display: flex; align-items: center; height: 16px; background: linear-gradient(90deg, transparent 4px, #b8b8b8 4px 5px, transparent 5px); }
.tree li svg { width: 16px; height: 13px; margin: 0 4px 0 8px; }
.tree .last { padding-left: 9px; background: linear-gradient(#b8b8b8, #b8b8b8) 4px 0 / 1px 8px no-repeat, linear-gradient(#b8b8b8, #b8b8b8) 4px 8px / 9px 1px no-repeat; }
.plus {
  width: 9px; height: 9px; border: 1px solid #9a9a9a;
  background: linear-gradient(#000, #000) 1px 3px / 5px 1px no-repeat, linear-gradient(#000, #000) 3px 1px / 1px 5px no-repeat, #fff;
}

/* Chart windows */
.mdi { flex: 1; position: relative; background: #808080; overflow: hidden; }
.win { position: absolute; width: 300px; padding: 0 4px 3px; border-radius: 7px 7px 0 0; background: #7382dc; box-shadow: inset 0 0 0 1px #5a62c0; }
.w1 { left: 1px; top: 1px; }
.w2 { left: 301px; top: 1px; }
.w3 { left: 1px; top: 189px; }
.w4 { left: 301px; top: 189px; }
.wtitle {
  height: 30px; margin: 0 -4px; padding: 3px 6px 0 7px; display: flex; align-items: center;
  border-radius: 7px 7px 0 0; background: linear-gradient(#8494e8, #9cb2f0 12%, #7b96e1 30%, #7f9ce6 75%, #7485dc);
}
.win .caption { color: #d8e4f8; text-shadow: none; }
.win:not(.active) .wb { border-color: #dce4fa; background: linear-gradient(135deg, #6c8cec, #4068d8); }
.win:not(.active) .red { background: linear-gradient(135deg, #c88898, #b06070); }
.active { background: #0838c8; box-shadow: inset 0 0 0 1px #0020a0; }
.active .wtitle { background: linear-gradient(#0a48d0, #2880ff 10%, #0058e6 30%, #0060f4 75%, #0048d0); }
.active .caption { color: #fff; text-shadow: 1px 1px #0030a0; }
.chart { width: 292px; height: 154px; background: #000; border: 2px solid; border-color: #9a9a90 #fff #fff #9a9a90; }
.chart text { fill: #fff; font: 9px "DejaVu Sans Condensed", "DejaVu Sans", sans-serif; }
.chart .tag { fill: #fff; }
.chart .tagt { fill: #000; }
.px { transform: translate(.5px, .5px); shape-rendering: crispEdges; }
.px path, .chart .cx, .grid { fill: none; stroke: #fff; stroke-width: 1; }
.px .grid, .grid { stroke: #8090a0; stroke-dasharray: 4 3; }
.px .price { stroke: #8494a8; }
.px .bar { stroke: #20e020; }
.px .hist { stroke: #c8c8c8; }
.px .sig { stroke: #e01828; stroke-dasharray: 3 2; shape-rendering: auto; }
.px .order { stroke: #20a030; stroke-dasharray: 10 4 2 4; }
.px .stop { stroke: #e02020; stroke-dasharray: 10 4 2 4; }
.px .line { stroke: #00f000; stroke-width: 2; shape-rendering: auto; }
.px .area { fill: #c4c4c4; stroke: none; }
.px .cci { stroke: #2ca898; }
.px .gap { stroke: #000; }

/* Terminal */
.terminal { flex: none; height: 228px; display: flex; border-top: 1px solid #fff; padding: 7px 3px 2px 0; }
.strip { width: 18px; flex: none; display: flex; flex-direction: column; padding-left: 1px; }
.strip button { width: 12px; height: 12px; display: flex; align-items: flex-start; justify-content: center; }
.strip h2 {
  width: 13px; flex: 1; background: #7a96df; color: #dfe8fa; line-height: 13px; padding-top: 3px;
  writing-mode: vertical-rl; transform: rotate(180deg);
}
.tmain { flex: 1; min-width: 0; display: flex; flex-direction: column; }
.twell { flex: 1; background: #fff; border-top: 1px solid #716f64; border-left: 1px solid #716f64; border-bottom: 1px solid #000; }
.orders td:first-child { text-align: left; padding-left: 2px; }
.orders td:nth-child(n+10) { border-right: 0; }
.orders td { padding-right: 3px; }
.orders td svg { display: inline-block; width: 12px; height: 13px; margin-right: 5px; vertical-align: middle; }
.orders .bal td { background: #c5c5c5; border-right: 0; border-color: #c5c5c5; padding-right: 5px; }
.orders .dot { display: inline-block; width: 12px; margin-right: 5px; text-align: center; color: #087020; font-size: 9px; }
.orders .alt td { background: #ebebeb; }
.c91 { width: 91px; } .c170 { width: 170px; } .c77 { width: 77px; } .c46 { width: 46px; } .c69 { width: 69px; }
.tabs { flex: none; height: 16px; display: flex; padding-left: 2px; }
.tabs button { position: relative; height: 14px; padding: 0 6px 0 7px; font-size: 9px; line-height: 14px; }
.tabs button::after {
  content: ""; position: absolute; right: -3px; top: 0; width: 1px; height: 14px;
  background: #000; transform: skewX(24deg);
}
.tabs .sel::after, .tabs button:last-child::after { transform: skewX(-24deg); }
.tabs .sel { background: linear-gradient(#fff, #fff) 3px 0 / 26px 14px no-repeat; }
.tabs .sel::before { content: ""; position: absolute; left: 0; top: 0; width: 1px; height: 14px; background: #000; transform: skewX(24deg); }

/* Taskbar runs past the lower edge of the screen */
.taskbar {
  flex: none; height: 22px; overflow: hidden; display: flex; align-items: flex-start; padding-top: 8px;
  background: linear-gradient(#1c50a8 0 1px, #3a80e8 3px, #2a6ce0 8px, #245edb 14px);
}
.start {
  width: 97px; height: 30px; flex: none; display: flex; align-items: center; gap: 9px; padding-left: 12px;
  color: #fff; font: italic 18px/24px "Noto Sans CJK SC", sans-serif;
  background: linear-gradient(#6cb460, #3c8c3c 5px, #389038); border-radius: 0 10px 10px 0;
}
.start svg { width: 20px; height: 20px; }
.quick { display: flex; align-items: center; height: 30px; width: 102px; padding-left: 12px; gap: 7px; flex: none; }
.quick svg { width: 16px; height: 16px; }
.quick .chev { width: 10px; height: 10px; margin: 0 0 8px 4px; }
.task {
  width: 159px; height: 26px; margin: 3px 1px 0 0; display: flex; align-items: center; gap: 4px; padding-left: 9px;
  color: #fff; border-radius: 3px; background: linear-gradient(#6a9cf4, #3c80f0 4px); white-space: nowrap;
}
.task svg { width: 16px; height: 16px; }
.task.cur { background: linear-gradient(#123c90, #1c4fb8 4px); }
.tray { margin-left: auto; display: flex; align-items: center; height: 30px; }
.tray svg { width: 16px; height: 16px; }
.notif { display: flex; align-items: center; gap: 3px; height: 30px; margin-left: 10px; padding: 0 12px 0 0; color: #fff; background: linear-gradient(#50c0f8, #1290e8 4px); }
.notif time { margin-left: 3px; }
```
